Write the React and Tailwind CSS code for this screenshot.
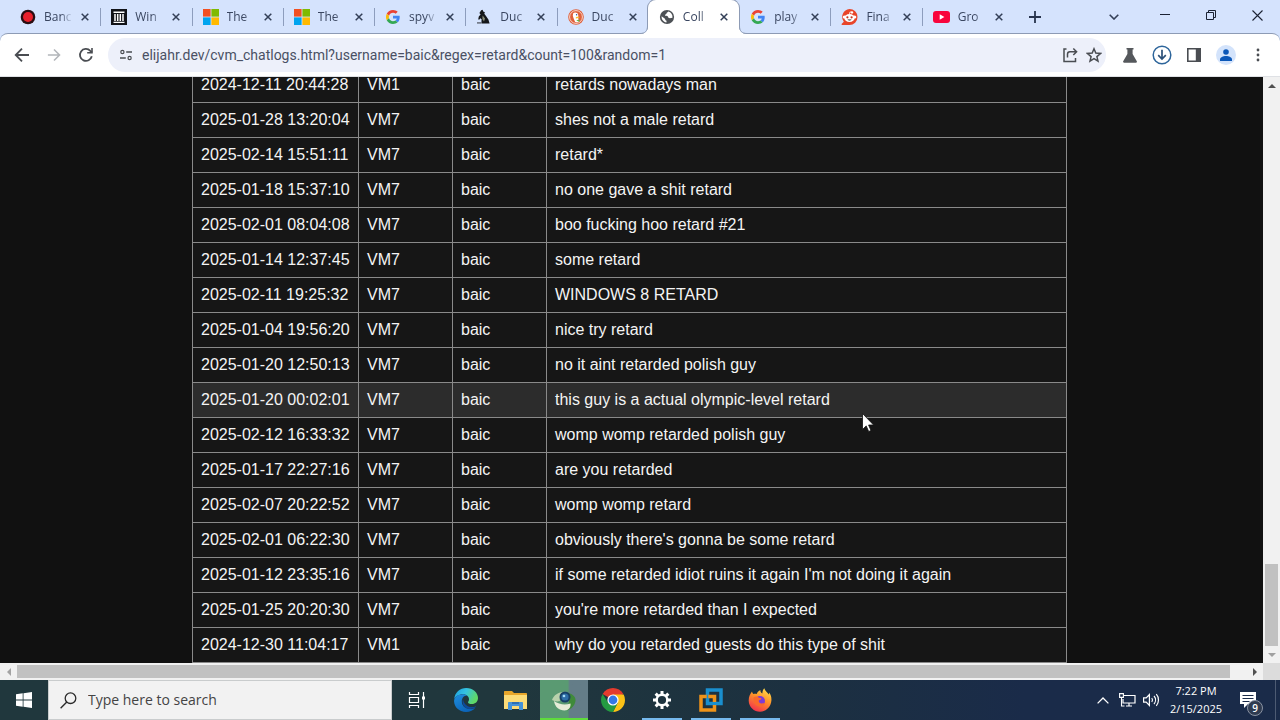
import React from "react";

const UI = "font-['Open_Sans','Noto_Sans',sans-serif]";

function RecordIcon() {
  return (
    <svg width="16" height="16" viewBox="0 0 16 16" className="shrink-0">
      <circle cx="8" cy="8" r="7.300" fill="#2a0d12" />
      <circle cx="8" cy="8" r="5" fill="#e8202c" />
    </svg>
  );
}

function ArchiveIcon() {
  return (
    <svg width="16" height="16" viewBox="0 0 16 16" className="shrink-0">
      <rect width="16" height="16" fill="#111318" />
      <path d="M2.500 2.500h11v1.500h-11zM2.500 12.800h11v1.200h-11z" fill="#fff" />
      <path d="M4 5v7M6.700 5v7M9.300 5v7M12 5v7" stroke="#fff" strokeWidth="1.500" />
    </svg>
  );
}

function MicrosoftIcon() {
  return (
    <svg width="16" height="16" viewBox="0 0 16 16" className="shrink-0">
      <path d="M0 0h7.600v7.600H0z" fill="#f25022" />
      <path d="M8.400 0H16v7.600H8.400z" fill="#7fba00" />
      <path d="M0 8.400h7.600V16H0z" fill="#00a4ef" />
      <path d="M8.400 8.400H16V16H8.400z" fill="#ffb900" />
    </svg>
  );
}

function GoogleIcon() {
  return (
    <svg width="14" height="14" viewBox="0 0 48 48" className="mx-px shrink-0">
      <path fill="#EA4335" d="M24 9.500c3.540 0 6.710 1.220 9.210 3.600l6.850-6.850C35.900 2.380 30.470 0 24 0 14.620 0 6.510 5.380 2.560 13.220l7.980 6.190C12.430 13.720 17.740 9.500 24 9.500z" />
      <path fill="#4285F4" d="M46.980 24.550c0-1.570-.15-3.090-.38-4.550H24v9.020h12.940c-.58 2.960-2.260 5.480-4.780 7.180l7.730 6c4.510-4.180 7.090-10.360 7.090-17.650z" />
      <path fill="#FBBC05" d="M10.530 28.590c-.48-1.450-.76-2.990-.76-4.590s.27-3.140.76-4.590l-7.980-6.190C.92 16.460 0 20.120 0 24c0 3.880.92 7.540 2.560 10.780l7.970-6.190z" />
      <path fill="#34A853" d="M24 48c6.480 0 11.930-2.130 15.890-5.810l-7.730-6c-2.150 1.450-4.920 2.300-8.160 2.300-6.260 0-11.570-4.220-13.470-9.910l-7.980 6.190C6.510 42.620 14.620 48 24 48z" />
    </svg>
  );
}

function DogIcon() {
  return (
    <svg width="16" height="16" viewBox="0 0 16 16" className="shrink-0">
      <path d="M5.200 1.200 6.600.8l.6 1.600 1.700.9-.6 1.500 1.700 2.200 2.400 3.600 1.200 3.800H5.400l.2-4.200-1.400-1-.6 1.400-1.400-.2.6-3 1.800-1.800L3.400 4z" fill="#15171a" />
      <path d="M6.600 6.400 9 9.400 8 12.600 6.400 10z" fill="#8c8f7a" />
      <path d="M1 13.200h4v1.400H1z" fill="#5d6470" />
    </svg>
  );
}

function DuckIcon() {
  return (
    <svg width="16" height="16" viewBox="0 0 16 16" className="shrink-0">
      <circle cx="8" cy="8" r="7.800" fill="#e0603a" />
      <circle cx="8" cy="8" r="6.400" fill="none" stroke="#fbe3da" strokeWidth=".9" />
      <path d="M5.200 4.200c1.800-1.200 4.600-.6 5 1.800.2 1.400-.2 2.400.2 4l.6 2.800c-1.200.6-2.600.6-3.800.2C6.400 11 5 8.400 4.800 6.400z" fill="#fff" />
      <path d="M7.800 8.200c1.400-.6 3-.5 3.800-.1-.6 1-2.400 1.500-3.800 1.400z" fill="#fbc02d" />
      <path d="m8.200 11.200 3.200-.8v2.600z" fill="#62b246" />
      <circle cx="8.600" cy="5.800" r=".7" fill="#2d4f8e" />
    </svg>
  );
}

function GlobeIcon() {
  return (
    <svg width="16" height="16" viewBox="0 0 16 16" className="shrink-0">
      <circle cx="8" cy="8" r="7.100" fill="#4d5156" />
      <path d="M7.600 2.400c-2 .2-3.600 1.200-4.600 3 .9 1.600 2 1.700 3.400 1.700 1.200 0 .6 1.300 1.800 1.300 1.500 0 .5 1.400 2 1.400h1.900c.6.7.5 1.400.3 2.300A5.600 5.600 0 0 0 13.600 7.600c-1 .6-1.900-.2-2-.9-.1-1-1.500-.6-2.300-.8-1.200-.3-.6-1.300-1.400-1.500-.8-.3-.9-1.400-.3-2z" fill="#4d5156" />
      <path d="M9.200 2.600c-.3 1-1.600.9-1.700 1.900-.1.900-1.500.7-1.500 1.800 0 1 2.200.5 2.900 1.100.6.500.3 1.500 1.100 1.700 1 .3 2.400-.2 3.500-.4.300-3-1.500-5.400-4.300-6.100zM2.600 7.200c-.3 3 1.800 5.800 4.800 6.200l.2-1.700c-1.500-.2-1.100-1.600-1.900-2.300-.9-.8-1.900-1.300-3.100-2.200z" fill="#fff" />
    </svg>
  );
}

function RedditIcon() {
  return (
    <svg width="17" height="16" viewBox="0 0 17 16" className="shrink-0">
      <path d="M8.500 0a8 8 0 1 1 0 16H1.200c-.7 0-.9-.8-.4-1.200l2-2A8 8 0 0 1 8.500 0z" fill="#e8452a" />
      <circle cx="3.300" cy="8" r="1.600" fill="#fff" />
      <circle cx="13.700" cy="8" r="1.600" fill="#fff" />
      <ellipse cx="8.500" cy="9" rx="5.200" ry="4" fill="#fff" />
      <circle cx="11" cy="3.400" r="1.200" fill="#fff" />
      <path d="M8.500 5 9 2.900l2 .4" stroke="#fff" strokeWidth=".8" fill="none" />
      <circle cx="6.400" cy="8.300" r="1.100" fill="#c8341f" />
      <circle cx="10.600" cy="8.300" r="1.100" fill="#c8341f" />
      <path d="M6.400 10.500c1 1.400 3.200 1.400 4.200 0z" fill="#222" />
    </svg>
  );
}

function YoutubeIcon() {
  return (
    <svg width="17" height="16" viewBox="0 0 17 16" className="shrink-0">
      <rect x="0" y="2" width="17" height="12" rx="3" fill="#f8053c" />
      <path d="m6.700 5.300 4.700 2.700-4.700 2.700z" fill="#fff" />
    </svg>
  );
}

const tabs = [
  { icon: RecordIcon, label: "Banc" },
  { icon: ArchiveIcon, label: "Win" },
  { icon: MicrosoftIcon, label: "The" },
  { icon: MicrosoftIcon, label: "The" },
  { icon: GoogleIcon, label: "spyv" },
  { icon: DogIcon, label: "Duc" },
  { icon: DuckIcon, label: "Duc" },
  { icon: GlobeIcon, label: "Coll", active: true },
  { icon: GoogleIcon, label: "play" },
  { icon: RedditIcon, label: "Fina" },
  { icon: YoutubeIcon, label: "Gro" },
];

function Tab({ tab, divider }) {
  const Icon = tab.icon;
  return (
    <div
      className={`relative flex h-full min-w-0 flex-1 items-center pl-[11px] ${
        tab.active ? "z-10 rounded-t-lg bg-white shadow-[0_0_0_1px_#8d9bb5] [clip-path:inset(-1px_-8px_0_-8px)]" : ""
      }`}
    >
      {tab.active && (
        <>
          <svg width="8" height="8" viewBox="0 0 8 8" className="absolute bottom-0 -left-2">
            <path d="M8 0v8H0c5 0 8-3 8-8z" fill="#fff" />
            <path d="M0 7.500C5 7.500 7.500 5 7.500 0" fill="none" stroke="#8d9bb5" />
          </svg>
          <svg width="8" height="8" viewBox="0 0 8 8" className="absolute bottom-0 -right-2">
            <path d="M0 0v8h8C3 8 0 5 0 0z" fill="#fff" />
            <path d="M8 7.500C3 7.500.5 5 .5 0" fill="none" stroke="#8d9bb5" />
          </svg>
        </>
      )}
      <Icon />
      <a
        href="#"
        className="ml-2 w-[30px] overflow-hidden whitespace-nowrap text-[12px] leading-4 text-[#3a4660] [mask-image:linear-gradient(to_right,black_55%,transparent_95%)]"
      >
        {tab.label}
      </a>
      <button aria-label="Close tab" className="ml-[3px] flex h-4 w-4 items-center justify-center">
        <svg width="8" height="8" viewBox="0 0 8 8">
          <path d="m.7.700 6.600 6.600M7.300.700.700 7.300" stroke="#333f57" strokeWidth="1.500" />
        </svg>
      </button>
      {divider && <span className="absolute -right-px top-2 h-[18px] w-px bg-[#8d9dbd]" />}
    </div>
  );
}

function TabStrip() {
  return (
    <header className="flex h-[34px] shrink-0 pl-[9px]">
      <div className="flex max-w-[1004px] flex-1">
        {tabs.map((tab, i) => (
          <Tab key={i} tab={tab} divider={!tab.active && i !== 6 && i !== 10} />
        ))}
      </div>
      <button aria-label="New tab" className="ml-4 flex w-3 items-center justify-center">
        <svg width="12" height="12" viewBox="0 0 12 12" className="shrink-0">
          <path d="M6 0v12M0 6h12" stroke="#27334d" strokeWidth="1.800" />
        </svg>
      </button>
      <div className="ml-auto flex">
        <button aria-label="Search tabs" className="flex w-8 items-center justify-center">
          <svg width="10" height="6" viewBox="0 0 10 6">
            <path d="m.7.700 4.300 4.300L9.300.700" stroke="#333f57" strokeWidth="1.600" fill="none" />
          </svg>
        </button>
        <button aria-label="Minimize" className="ml-3 flex w-[46px] items-center justify-center pb-1">
          <svg width="10" height="10" viewBox="0 0 10 10">
            <path d="M0 4.500h10" stroke="#1b2233" />
          </svg>
        </button>
        <button aria-label="Restore" className="flex w-[46px] items-center justify-center pb-1">
          <svg width="10" height="10" viewBox="0 0 10 10">
            <path d="M.5 2.500h7v7h-7zM2.500 2.500v-2h7v7h-2" stroke="#1b2233" fill="none" />
          </svg>
        </button>
        <button aria-label="Close" className="flex w-[46px] items-center justify-center pb-1">
          <svg width="11" height="11" viewBox="0 0 11 11">
            <path d="m.5.500 10 10M10.500.500l-10 10" stroke="#1b2233" strokeWidth="1.100" />
          </svg>
        </button>
      </div>
    </header>
  );
}

function Toolbar() {
  return (
    <div className="-mt-px flex h-11 shrink-0 items-center rounded-t-lg border-b border-t border-b-[#dfe1e5] border-t-[#8d9bb5] bg-white px-[14px]">
      <button aria-label="Back" className="flex h-8 w-4 items-center justify-center">
        <svg width="16" height="16" viewBox="0 0 16 16">
          <path d="M15 8H2M8 1.700 1.700 8 8 14.300" stroke="#4a4d52" strokeWidth="1.800" fill="none" />
        </svg>
      </button>
      <button aria-label="Forward" className="ml-4 flex h-8 w-4 items-center justify-center">
        <svg width="14" height="14" viewBox="0 0 16 16">
          <path d="M1 8h13M8 1.700 14.300 8 8 14.300" stroke="#b3b6ba" strokeWidth="1.800" fill="none" />
        </svg>
      </button>
      <button aria-label="Reload" className="ml-4 flex h-8 w-4 items-center justify-center">
        <svg width="16" height="16" viewBox="0 0 16 16">
          <path d="M13.800 9.300A6 6 0 1 1 12.300 3.800L14 5.500" stroke="#4a4d52" strokeWidth="1.800" fill="none" />
          <path d="M14.800 1v5.600H9.200V5h4V1z" fill="#4a4d52" />
        </svg>
      </button>
      <div className="ml-[14px] flex h-[34px] flex-1 items-center rounded-full bg-[#edf0fa] pl-3 pr-1">
        <svg width="12" height="12" viewBox="0 0 12 12" className="shrink-0">
          <circle cx="2.400" cy="3" r="1.600" stroke="#4a4d52" strokeWidth="1.200" fill="none" />
          <path d="M6.200 3H12M0 9h5.800" stroke="#4a4d52" strokeWidth="1.400" />
          <circle cx="9.600" cy="9" r="1.600" stroke="#4a4d52" strokeWidth="1.200" fill="none" />
        </svg>
        <input
          aria-label="Address"
          defaultValue="elijahr.dev/cvm_chatlogs.html?username=baic&regex=retard&count=100&random=1"
          className="ml-[10px] min-w-0 flex-1 bg-transparent font-[Roboto,sans-serif] text-[14px] leading-5 text-[#4a5064] outline-none"
        />
        <button aria-label="Share" className="flex h-6 w-4 items-center justify-center">
          <svg width="15" height="16" viewBox="0 0 15 16">
            <path d="M3.500 2H1v12.500h11.500V11" stroke="#4a4d52" strokeWidth="1.500" fill="none" />
            <path d="M4.500 10.500V7.200c0-1.500.9-2.400 2.400-2.400h6M10.300 1.500l3.300 3.300L10.300 8" stroke="#4a4d52" strokeWidth="1.500" fill="none" />
          </svg>
        </button>
        <button aria-label="Bookmark" className="ml-2 flex h-6 w-4 items-center justify-center">
          <svg width="16" height="16" viewBox="0 0 16 16">
            <path d="m8 1.800 1.800 4.300 4.700.4-3.600 3.100 1.100 4.600L8 11.700l-4 2.500 1.100-4.600L1.500 6.500l4.700-.4z" stroke="#4a4d52" strokeWidth="1.500" fill="none" />
          </svg>
        </button>
      </div>
      <div className="ml-4 flex items-center gap-[14px]">
        <button aria-label="Experiments" className="flex h-8 w-4 items-center justify-center">
          <svg width="14" height="15" viewBox="0 0 14 15">
            <path d="M3.500 0h7v1.600H9.600V6l4.200 7.200c.4.700 0 1.500-.8 1.500H1c-.8 0-1.200-.8-.8-1.500L4.400 6V1.600h-.9z" fill="#55585c" />
          </svg>
        </button>
        <button aria-label="Downloads" className="flex h-8 w-5 items-center justify-center">
          <svg width="20" height="20" viewBox="0 0 20 20" className="shrink-0">
            <circle cx="10" cy="10" r="8.800" fill="#fff" stroke="#2d659b" strokeWidth="1.500" />
            <path d="M10 4.800v9M6.200 10.200 10 14l3.800-3.800" stroke="#2b5078" strokeWidth="1.700" fill="none" />
          </svg>
        </button>
        <button aria-label="Side panel" className="flex h-8 w-4 items-center justify-center">
          <svg width="14" height="14" viewBox="0 0 14 14">
            <path d="M.8.800h12.400v12.400H.8z" stroke="#4a4d52" strokeWidth="1.600" fill="none" />
            <path d="M8.800 0H14v14H8.800z" fill="#4a4d52" />
          </svg>
        </button>
        <button aria-label="Profile" className="flex h-5 w-5 items-center justify-center rounded-full bg-[#d3e3fb]">
          <svg width="12" height="12" viewBox="0 0 12 12">
            <circle cx="6" cy="3" r="2.800" fill="#0b57b8" />
            <path d="M0 12v-1.500C0 8.300 3 7 6 7s6 1.300 6 3.500V12z" fill="#0b57b8" />
          </svg>
        </button>
        <button aria-label="Menu" className="flex h-8 w-4 items-center justify-center">
          <svg width="4" height="14" viewBox="0 0 4 14">
            <circle cx="2" cy="2" r="1.400" fill="#4a4d52" />
            <circle cx="2" cy="7" r="1.400" fill="#4a4d52" />
            <circle cx="2" cy="12" r="1.400" fill="#4a4d52" />
          </svg>
        </button>
      </div>
    </div>
  );
}

const rows = [
  ["2024-12-11 20:44:28", "VM1", "baic", "retards nowadays man"],
  ["2025-01-28 13:20:04", "VM7", "baic", "shes not a male retard"],
  ["2025-02-14 15:51:11", "VM7", "baic", "retard*"],
  ["2025-01-18 15:37:10", "VM7", "baic", "no one gave a shit retard"],
  ["2025-02-01 08:04:08", "VM7", "baic", "boo fucking hoo retard #21"],
  ["2025-01-14 12:37:45", "VM7", "baic", "some retard"],
  ["2025-02-11 19:25:32", "VM7", "baic", "WINDOWS 8 RETARD"],
  ["2025-01-04 19:56:20", "VM7", "baic", "nice try retard"],
  ["2025-01-20 12:50:13", "VM7", "baic", "no it aint retarded polish guy"],
  ["2025-01-20 00:02:01", "VM7", "baic", "this guy is a actual olympic-level retard"],
  ["2025-02-12 16:33:32", "VM7", "baic", "womp womp retarded polish guy"],
  ["2025-01-17 22:27:16", "VM7", "baic", "are you retarded"],
  ["2025-02-07 20:22:52", "VM7", "baic", "womp womp retard"],
  ["2025-02-01 06:22:30", "VM7", "baic", "obviously there's gonna be some retard"],
  ["2025-01-12 23:35:16", "VM7", "baic", "if some retarded idiot ruins it again I'm not doing it again"],
  ["2025-01-25 20:20:30", "VM7", "baic", "you're more retarded than I expected"],
  ["2024-12-30 11:04:17", "VM1", "baic", "why do you retarded guests do this type of shit"],
];

const HOVERED = 9;

function LogTable() {
  return (
    <table className="mx-auto -mt-[10px] w-[875px] table-fixed border-collapse bg-[#161616] font-['Liberation_Sans',Arial,sans-serif] text-[16px] leading-[18px] text-[#f4f4f4]">
      <colgroup>
        <col className="w-[166px]" />
        <col className="w-[94px]" />
        <col className="w-[94px]" />
        <col />
      </colgroup>
      <tbody>
        {rows.map((row, i) => (
          <tr key={i} className={i === HOVERED ? "bg-[#2c2c2c]" : ""}>
            {row.map((cell, j) => (
              <td key={j} className="whitespace-nowrap border border-[#8a8a8a] px-2 py-2">
                {cell}
              </td>
            ))}
          </tr>
        ))}
      </tbody>
    </table>
  );
}

function Arrow({ d, color }) {
  return (
    <svg width="8" height="8" viewBox="0 0 8 8" className="shrink-0">
      <path d={d} fill={color} />
    </svg>
  );
}

function PageView() {
  return (
    <div className="flex min-h-0 flex-1 flex-col">
      <div className="flex min-h-0 flex-1">
        <main className="min-w-0 flex-1 overflow-hidden bg-[#111111] pr-1">
          <LogTable />
        </main>
        <div className="flex w-[17px] flex-col items-center bg-[#f1f1f1]">
          <div className="flex h-[17px] items-center">
            <Arrow d="M0 6l4-4 4 4z" color="#505050" />
          </div>
          <div className="flex-1" />
          <div className="h-[82px] w-[13px] bg-[#c1c1c1]" />
          <div className="flex h-[17px] items-center">
            <Arrow d="M0 2l4 4 4-4z" color="#a0a0a0" />
          </div>
        </div>
      </div>
      <div className="flex h-[17px] shrink-0 items-center bg-[#f1f1f1]">
        <div className="flex w-[17px] justify-center">
          <Arrow d="M6 0L2 4l4 4z" color="#a3a3a3" />
        </div>
        <div className="h-[13px] flex-1 bg-[#c1c1c1]" />
        <div className="w-4" />
        <div className="flex w-[17px] justify-center">
          <Arrow d="M2 0l4 4-4 4z" color="#505050" />
        </div>
        <div className="h-full w-[17px] bg-[#dcdcdc]" />
      </div>
    </div>
  );
}

function TaskViewIcon() {
  return (
    <svg width="18" height="18" viewBox="0 0 18 18">
      <path d="M1.500 1v2.500h9V1M1.500 17v-2.500h9V17M1.500 6.500h9v5h-9z" stroke="#fff" strokeWidth="1.200" fill="none" />
      <path d="M15.500 1v16" stroke="#fff" strokeWidth="1.200" />
      <path d="M14 5.500h3v3h-3z" fill="#fff" />
    </svg>
  );
}

function EdgeIcon() {
  return (
    <svg width="24" height="24" viewBox="0 0 24 24">
      <defs>
        <linearGradient id="edgeTop" x1="0" y1="0" x2="1" y2="0.400">
          <stop offset="0" stopColor="#1b9de2" />
          <stop offset=".5" stopColor="#35c3e0" />
          <stop offset="1" stopColor="#5fd867" />
        </linearGradient>
        <linearGradient id="edgeLow" x1="0" y1="0" x2="0.600" y2="1">
          <stop offset="0" stopColor="#1f8fe0" />
          <stop offset="1" stopColor="#0b63b8" />
        </linearGradient>
      </defs>
      <path d="M.2 11C.8 4.600 6 0 12.200 0 19 0 24 4.800 24 10c0 3.800-2.800 6-6 6-2.600 0-4-.9-4-1.800 0-.7 1-1.200 1-3C15 8.500 12.500 6.200 9 6.200 4.500 6.200 1.200 8.600.2 11z" fill="url(#edgeTop)" />
      <path d="M.1 12.500C.5 9 4 6.200 8.800 6.200c2 0 3.400.6 4.400 1.400C9.600 7.600 7.800 10.500 7.800 13.600c0 4 3.200 7.400 8 7.400 2.200 0 4-.6 5.600-1.600C19.400 22.200 16 24 12 24 5 24-.4 18.600.1 12.500z" fill="url(#edgeLow)" />
      <path d="M9 11c-2 4.600 1.600 9.800 6.800 9.900 2.600 0 4.600-.8 5.900-1.800.5-.4 0-.9-.5-.7-6 2.400-11.600-1.600-12.200-7.400z" fill="#0d4a9c" />
    </svg>
  );
}

function FolderIcon() {
  return (
    <svg width="23" height="19" viewBox="0 0 23 19">
      <path d="M0 1C0 .4.400 0 1 0h7l2 2h12c.6 0 1 .4 1 1v15H0z" fill="#e8a62a" />
      <path d="M0 4h23v14H0z" fill="#fcdc78" />
      <path d="M4 19v-7c0-.6.400-1 1-1h13c.6 0 1 .4 1 1v7h-4v-4H8v4z" fill="#4492d8" />
      <path d="M8 11h7v2H8z" fill="#2d6fb4" />
    </svg>
  );
}

function OrbIcon() {
  return (
    <svg width="24" height="24" viewBox="0 0 24 24">
      <path d="M16 5c5 1 8 4 7.500 8-1 5-4 8-8.500 9.500l2-9z" fill="#3f8a3a" />
      <path d="M2 13c1 6 5 9.500 10.500 9.500 4 0 6.500-3 6-7C13 17.500 7 16.500 2 13z" fill="#e6ecd8" />
      <path d="M0 12C2 7 7 3 15 4c-5 1-8 4-7 9-3 1-6 0-8-1z" fill="#b9d2ac" />
      <circle cx="13" cy="9" r="5.500" fill="#173f66" />
      <circle cx="13" cy="9" r="3.600" fill="#2f6fa8" />
      <circle cx="12" cy="8" r="1.300" fill="#a8dbf5" />
    </svg>
  );
}

function ChromeIcon() {
  return (
    <svg width="24" height="24" viewBox="0 0 24 24">
      <path d="M12 12 1.610 6A12 12 0 0 1 22.390 6z" fill="#e33b2e" />
      <path d="M12 6.500h10.660A12 12 0 0 1 24 12c0 6.600-5.400 12-12 12l4.760-9.250z" fill="#fbc116" />
      <path d="M7.240 14.750 1.610 6A12 12 0 0 0 12 24l4.760-9.250z" fill="#249a41" />
      <circle cx="12" cy="12" r="5.600" fill="#fff" />
      <circle cx="12" cy="12" r="4.400" fill="#3478e5" />
    </svg>
  );
}

function GearIcon() {
  return (
    <svg width="18" height="18" viewBox="0 0 18 18">
      <circle cx="9" cy="9" r="5.300" stroke="#fff" strokeWidth="2.400" fill="none" />
      <path d="M9 0v3.500M9 14.500V18M0 9h3.500M14.500 9H18M2.640 2.640l2.500 2.500M12.860 12.860l2.500 2.500M2.640 15.360l2.500-2.500M12.860 5.140l2.500-2.500" stroke="#fff" strokeWidth="3" />
    </svg>
  );
}

function VmwareIcon() {
  return (
    <svg width="24" height="24" viewBox="0 0 24 24">
      <path d="M8.500 2h13.500v13.500H8.500z" stroke="#1a8fce" strokeWidth="3.500" fill="none" />
      <path d="M2 8.500h13.500V22H2z" stroke="#f09318" strokeWidth="3.500" fill="none" />
      <path d="M10.500 15.500H18" stroke="#1a8fce" strokeWidth="3" />
      <path d="M8.500 6.500v7" stroke="#1a8fce" strokeWidth="1.500" />
    </svg>
  );
}

function FirefoxIcon() {
  return (
    <svg width="24" height="24" viewBox="0 0 24 24">
      <defs>
        <linearGradient id="fox" x1=".8" y1="0" x2=".3" y2="1">
          <stop offset="0" stopColor="#ffe14d" />
          <stop offset=".45" stopColor="#ff9329" />
          <stop offset="1" stopColor="#f2304e" />
        </linearGradient>
      </defs>
      <path d="M4 3.500c.2 1.200.7 2 1.400 2.600 1-.4 2.200-.5 3.300-.2C9.500 4 10.800 2.800 12.400 2c-.2 1.600.6 2.700 2 3.600C14.300 3.600 15 1.600 16.300.2c.6 2.800 3 4 4.600 6.200.2-.6.2-1.200.1-1.800C23 7 23.600 9.600 23.400 12.600 23 18.800 18 23.800 12 23.800S.8 19 .7 12.800C.6 9 2 6 4 3.500z" fill="url(#fox)" />
      <circle cx="12" cy="13" r="5" fill="#7d3bd6" />
      <path d="M5.500 9.500c2-1.600 4-1 5.500.3 1.200.2 2 .3 2.500.8-.4 1-1.600 1.500-2.700 1.900-.3 1.700 1 3 2.700 3 1.600 0 2.500-.7 3.700-.6-1 2.400-3.600 4.200-6.200 3.600-4-.8-6-4.800-5.500-9z" fill="#fb6a2c" />
    </svg>
  );
}

const apps = [
  { name: "Task View", icon: TaskViewIcon },
  { name: "Microsoft Edge", icon: EdgeIcon },
  { name: "File Explorer", icon: FolderIcon },
  { name: "Browser", icon: OrbIcon, active: true },
  { name: "Google Chrome", icon: ChromeIcon },
  { name: "Settings", icon: GearIcon, running: true },
  { name: "VMware Workstation", icon: VmwareIcon, running: true },
  { name: "Firefox", icon: FirefoxIcon, running: true },
];

function Taskbar() {
  return (
    <footer className="flex h-10 shrink-0 bg-linear-to-r from-[#20373d] from-40% via-[#1c3040] via-62% to-[#1a2b49] to-80%">
      <button aria-label="Start" className="flex w-12 items-center justify-center">
        <svg width="16" height="16" viewBox="0 0 16 16">
          <path d="M0 2.300 6.700 1.300v6.300H0zM7.500 1.200 16 0v7.600H7.500zM0 8.400h6.700v6.300L0 13.700zM7.500 8.400H16V16l-8.500-1.200z" fill="#fff" />
        </svg>
      </button>
      <div className="flex w-[344px] items-center border border-[#c9cccd] bg-[#f2f2f2] pl-[11px]">
        <svg width="17" height="17" viewBox="0 0 17 17" className="shrink-0">
          <circle cx="10.500" cy="6.200" r="5.300" stroke="#2b2b2b" strokeWidth="1.300" fill="none" />
          <path d="M6.800 10 .6 16.200" stroke="#2b2b2b" strokeWidth="1.400" />
        </svg>
        <input
          aria-label="Search"
          placeholder="Type here to search"
          className="ml-[11px] min-w-0 flex-1 bg-transparent text-[14px] leading-5 outline-none placeholder:text-[#444444]"
        />
      </div>
      <nav className="ml-px flex gap-px">
        {apps.map(({ name, icon: Icon, active, running }) => (
          <button
            key={name}
            aria-label={name}
            className={`relative flex w-12 items-center justify-center ${
              active ? "bg-linear-to-r from-[#5a9a72] from-58% to-[#647d88] to-62%" : ""
            }`}
          >
            <Icon />
            {active && <span className="absolute inset-x-0 bottom-0 h-0.5 bg-[#5fdc3c]" />}
            {running && <span className="absolute inset-x-1 bottom-0 h-0.5 bg-[#76b9ed]" />}
          </button>
        ))}
      </nav>
      <div className="ml-auto flex items-center text-white">
        <button aria-label="Hidden icons" className="flex w-3 justify-center">
          <svg width="12" height="7" viewBox="0 0 12 7" className="shrink-0">
            <path d="M.6 6.400 6 1l5.400 5.400" stroke="#fff" strokeWidth="1.300" fill="none" />
          </svg>
        </button>
        <button aria-label="Network" className="ml-[10px]">
          <svg width="17" height="14" viewBox="0 0 17 14">
            <path d="M5 2.500h11v7.500H4V6M7 13h6M10 10v3" stroke="#fff" strokeWidth="1.200" fill="none" />
            <path d="M.6.600h3.800v3.800H.6zM2.500 4.400V13h3" stroke="#fff" strokeWidth="1.100" fill="none" />
          </svg>
        </button>
        <button aria-label="Volume" className="ml-[7px]">
          <svg width="17" height="14" viewBox="0 0 17 14">
            <path d="M.6 4.800h2.600L6.400 1.500v11L3.200 9.200H.6zM8.800 5c.9 1.200.9 2.800 0 4M11 3c2 2.300 2 5.700 0 8M13.300 1.200c2.900 3.300 2.900 8.300 0 11.600" stroke="#fff" strokeWidth="1.200" fill="none" />
          </svg>
        </button>
        <div className="ml-2 w-[56px] whitespace-nowrap text-center text-[11px] leading-[18px]">
          <div>7:22 PM</div>
          <div>2/15/2025</div>
        </div>
        <button aria-label="Notifications" className="relative ml-[15px] mr-3 h-6 w-6">
          <svg width="16" height="16" viewBox="0 0 16 16" className="ml-px">
            <path d="M0 0h16v12H8l-4 4v-4H0z" fill="#fff" />
            <path d="M2.500 3.500h11M2.500 6.500h11M2.500 9.500h7" stroke="#1a2b49" strokeWidth="1.200" />
          </svg>
          <span className="absolute -bottom-1 right-0 flex h-4 w-4 items-center justify-center rounded-full border border-[#8a93a3] bg-[#2f3b50] text-[10px] font-semibold leading-none">
            9
          </span>
        </button>
        <button aria-label="Show desktop" className="h-10 w-[5px] border-l border-[#4d5b73]" />
      </div>
    </footer>
  );
}

export default function App() {
  return (
    <div className={`relative flex h-screen flex-col overflow-hidden bg-[#d5e3fd] ${UI}`}>
      <TabStrip />
      <Toolbar />
      <PageView />
      <Taskbar />
      <svg width="12" height="19" viewBox="0 0 12 19" className="pointer-events-none absolute left-[862px] top-[413px]">
        <path d="M.5.500v16l3.700-3.600 2.500 5.600 2.300-1-2.400-5.500h5z" fill="#fff" stroke="#111" strokeWidth=".8" />
      </svg>
    </div>
  );
}
